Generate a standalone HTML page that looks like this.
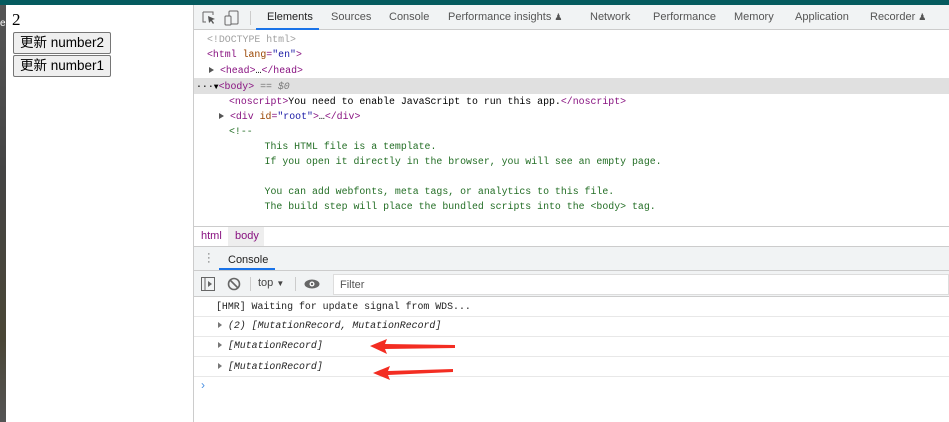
<!DOCTYPE html>
<html><head><meta charset="utf-8"><style>
*{box-sizing:border-box;margin:0;padding:0}
body{width:949px;height:422px;overflow:hidden;background:#fff;position:relative;font-family:"Liberation Sans","Noto Sans CJK SC",sans-serif}
.a{position:absolute}
.m{font-family:"Liberation Mono",monospace;font-size:9.9px;white-space:pre;position:absolute;line-height:15px}
.t{color:#881280}.at{color:#994500}.v{color:#1a1aa6}.g{color:#a0a0a0}.c{color:#236e25}
.btn{position:absolute;left:13px;width:98px;height:22px;border:1px solid #767676;border-radius:2px;background:#efefef;font-size:13.5px;color:#000;text-align:center;line-height:20px}
.tab{position:absolute;top:11px;font-size:11px;color:#555}
.tri{display:inline-block;width:0;height:0;border-left:5px solid #555;border-top:3.5px solid transparent;border-bottom:3.5px solid transparent}
.row{position:absolute;left:194px;right:0;border-bottom:1px solid #e8e8e8}
</style></head><body>
<div class="a" style="left:0;top:0;width:949px;height:5px;background:#055b5f"></div>
<div class="a" style="left:0;top:5px;width:6px;height:417px;background:linear-gradient(#555,#444 40%,#4a4636 80%,#555)"></div>
<div class="a" style="left:0;top:18px;font-size:10px;color:#fff">e</div>
<div class="a" style="left:12px;top:10px;font-family:'Liberation Serif',serif;font-size:17px">2</div>
<div class="btn" style="top:32px">更新 number2</div>
<div class="btn" style="top:55px">更新 number1</div>

<div class="a" style="left:193px;top:5px;width:1px;height:417px;background:#ccc"></div>
<div class="a" style="left:194px;top:5px;right:0;height:25px;background:#f1f3f4;border-bottom:1px solid #ccc"></div>
<svg class="a" style="left:202px;top:11px" width="16" height="14"><path d="M1 1h10v3M1 1v10h3" stroke="#666" fill="none"/><path d="M6 5l7 3-3 1 2 3-1 1-2-3-2 2z" fill="#555"/></svg>
<svg class="a" style="left:224px;top:10px" width="16" height="16"><rect x="5" y="1" width="9" height="13" rx="1" stroke="#666" fill="none"/><rect x="1" y="6" width="6" height="9" rx="1" stroke="#666" fill="#f1f3f4"/></svg>
<div class="a" style="left:250px;top:11px;width:1px;height:14px;background:#ccc"></div>
<div class="tab" style="left:267px;color:#222">Elements</div>
<div class="a" style="left:256px;top:28px;width:63px;height:2px;background:#1a73e8"></div>
<div class="tab" style="left:331px">Sources</div>
<div class="tab" style="left:389px">Console</div>
<div class="tab" style="left:448px">Performance insights <span style="font-size:9px">♟</span></div>
<div class="tab" style="left:590px">Network</div>
<div class="tab" style="left:653px">Performance</div>
<div class="tab" style="left:734px">Memory</div>
<div class="tab" style="left:795px">Application</div>
<div class="tab" style="left:870px">Recorder <span style="font-size:9px">♟</span></div>

<div class="m g" style="left:207px;top:32px">&lt;!DOCTYPE html&gt;</div>
<div class="m" style="left:207px;top:47px"><span class="t">&lt;html </span><span class="at">lang</span><span class="t">=</span><span class="v">"en"</span><span class="t">&gt;</span></div>
<div class="m" style="left:209px;top:63px"><span class="tri"></span> <span class="t">&lt;head&gt;</span>…<span class="t">&lt;/head&gt;</span></div>
<div class="a" style="left:194px;top:78px;right:0;height:16px;background:#e0e0e0"></div>
<div class="m" style="left:196px;top:79px">···<span style="font-size:8px">▼</span><span class="t">&lt;body&gt;</span> <i style="color:#777">== $0</i></div>
<div class="m" style="left:229px;top:94px"><span class="t">&lt;noscript&gt;</span>You need to enable JavaScript to run this app.<span class="t">&lt;/noscript&gt;</span></div>
<div class="m" style="left:219px;top:109px"><span class="tri"></span> <span class="t">&lt;div </span><span class="at">id</span><span class="t">=</span><span class="v">"root"</span><span class="t">&gt;</span>…<span class="t">&lt;/div&gt;</span></div>
<div class="m c" style="left:229px;top:124px">&lt;!--
      This HTML file is a template.
      If you open it directly in the browser, you will see an empty page.

      You can add webfonts, meta tags, or analytics to this file.
      The build step will place the bundled scripts into the &lt;body&gt; tag.</div>

<div class="a" style="left:194px;top:226px;right:0;height:21px;border-top:1px solid #ccc;border-bottom:1px solid #ccc;background:#fff"></div>
<div class="a" style="left:228px;top:227px;width:36px;height:19px;background:#eee"></div>
<div class="a t" style="left:201px;top:230px;font-size:11px">html</div>
<div class="a t" style="left:235px;top:230px;font-size:11px">body</div>

<div class="a" style="left:194px;top:247px;right:0;height:24px;background:#f1f3f4;border-bottom:1px solid #ccc"></div>
<div class="a" style="left:207px;top:252px;font-size:11px;color:#555;line-height:4px">·<br>·<br>·</div>
<div class="a" style="left:228px;top:254px;font-size:11px;color:#222">Console</div>
<div class="a" style="left:219px;top:268px;width:56px;height:2px;background:#1a73e8"></div>

<div class="a" style="left:194px;top:271px;right:0;height:26px;background:#f1f3f4;border-bottom:1px solid #ccc"></div>
<svg class="a" style="left:201px;top:277px" width="14" height="14"><rect x="0.5" y="0.5" width="13" height="13" stroke="#666" fill="none"/><path d="M4 1v12" stroke="#666"/><path d="M7 4l4 3-4 3z" fill="#666"/></svg>
<svg class="a" style="left:227px;top:277px" width="14" height="14"><circle cx="7" cy="7" r="5.5" stroke="#666" stroke-width="1.6" fill="none"/><path d="M3 3l8 8" stroke="#666" stroke-width="1.6"/></svg>
<div class="a" style="left:250px;top:277px;width:1px;height:14px;background:#ccc"></div>
<div class="a" style="left:258px;top:277px;font-size:11px;color:#444">top <span style="font-size:8px">▼</span></div>
<div class="a" style="left:295px;top:277px;width:1px;height:14px;background:#ccc"></div>
<svg class="a" style="left:304px;top:279px" width="16" height="10"><ellipse cx="8" cy="5" rx="7.5" ry="4.5" fill="#666"/><circle cx="8" cy="5" r="2.5" fill="#fff"/><circle cx="8" cy="5" r="1.2" fill="#666"/></svg>
<div class="a" style="left:333px;top:274px;right:0;height:21px;background:#fff;border:1px solid #ddd;font-size:11px;color:#555;padding:4px 6px">Filter</div>

<div class="row" style="top:297px;height:20px"></div>
<div class="m" style="left:216px;top:299px;color:#222">[HMR] Waiting for update signal from WDS...</div>
<div class="row" style="top:317px;height:20px"></div>
<div class="m" style="left:218px;top:318px;color:#222"><span class="tri" style="border-left-width:4px;border-left-color:#777"></span> <i>(2) [MutationRecord, MutationRecord]</i></div>
<div class="row" style="top:337px;height:20px"></div>
<div class="m" style="left:218px;top:338px;color:#222"><span class="tri" style="border-left-width:4px;border-left-color:#777"></span> <i>[MutationRecord]</i></div>
<div class="row" style="top:357px;height:20px"></div>
<div class="m" style="left:218px;top:359px;color:#222"><span class="tri" style="border-left-width:4px;border-left-color:#777"></span> <i>[MutationRecord]</i></div>
<div class="a" style="left:201px;top:378px;color:#4a90e2;font-size:12px">›</div>

<svg class="a" style="left:365px;top:335px" width="95" height="50"><path d="M5 11L22 4 20 9 90 10 90 13 20 14 22 19z" fill="#f32d22"/><path d="M8 38L25 31 23 36 88 34 88 37 23 40 25 45z" fill="#f32d22"/></svg>
</body></html>
